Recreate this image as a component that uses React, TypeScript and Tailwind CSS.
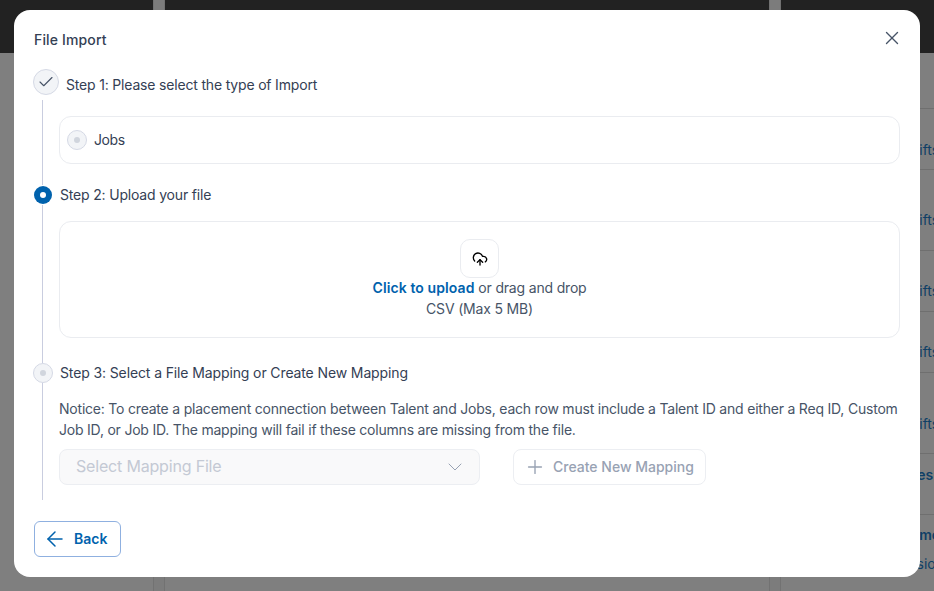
import { ArrowLeft, Check, ChevronDown, CloudUpload, Plus, X } from "lucide-react";

function Strip() {
    return <div className="w-[12px] shrink-0 border-x border-[#727272] bg-[#7c7c7c]" />;
}

export default function App() {
    return (
        <div className="relative h-[591px] w-[934px] overflow-hidden bg-[#7f7f7f] font-['Inter',sans-serif]">
            {/* Pagina de fondo */}
            <div className="flex h-full">
                <div className="w-[153px] shrink-0">
                    <div className="h-[53px] bg-[#222222]" />
                </div>
                <Strip />
                <div className="flex-1">
                    <div className="h-[53px] bg-[#222222]" />
                </div>
                <Strip />
                <div className="w-[153px] shrink-0 overflow-hidden whitespace-nowrap text-[14px] text-[#0f3f66]">
                    <div className="h-[53px] bg-[#222222]" />
                    <div className="mt-[55px] flex flex-col border-t border-[#6f6f6f]">
                        <div className="h-[61px] border-b border-[#6f6f6f] pl-[121px] pt-[30px]">Shifts</div>
                        <div className="h-[81px] border-b border-[#6f6f6f] pl-[121px] pt-[39px]">Shifts</div>
                        <div className="h-[61px] border-b border-[#6f6f6f] pl-[121px] pt-[29px]">Shifts</div>
                        <div className="h-[61px] border-b border-[#6f6f6f] pl-[121px] pt-[29px]">Shifts</div>
                        <div className="h-[81px] border-b border-[#6f6f6f] pl-[121px] pt-[40px]">Shifts</div>
                        <div className="h-[61px] border-b border-[#6f6f6f] pl-[115px] pt-[10px] font-semibold">Roles</div>
                        <div className="pl-[121px] pt-[9px] font-semibold">Remote</div>
                        <div className="pl-[90px] pt-[8px]">Permissions</div>
                    </div>
                </div>
            </div>

            {/* Modal */}
            <div className="absolute left-[14px] top-[10px] flex h-[567px] w-[906px] flex-col rounded-2xl bg-white px-5 pt-5 text-[14px] tracking-[-0.18px] text-[#344054]">
                <div className="flex h-5 items-center justify-between">
                    <h2 className="text-[14px] font-medium leading-5 tracking-[0.15px]">File Import</h2>
                    <X className="h-[22px] w-[22px] shrink-0 translate-x-[3px] -translate-y-0.5 text-[#475467]" strokeWidth={1.5} />
                </div>

                <div className="mt-[19px] flex h-[26px] items-center gap-[7px] -ml-px">
                    <div className="flex h-[26px] w-[26px] items-center justify-center rounded-full border border-[#d5d9e5] bg-[#f2f4f7]">
                        <Check className="h-[18px] w-[18px] text-[#475467]" strokeWidth={1.5} />
                    </div>
                    <span className="mt-[6px] leading-5">Step 1: Please select the type of Import</span>
                </div>

                <div className="ml-2 mt-[5px] flex flex-col border-l border-[#c9cddf] pl-4">
                    <div className="mt-4 flex h-[48px] items-center gap-[7px] rounded-xl border border-[#eaecf0] pl-[7px]">
                        <div className="flex h-5 w-5 items-center justify-center rounded-full border border-[#d5d9e5] bg-[#f2f4f7]">
                            <div className="h-[6px] w-[6px] rounded-full bg-[#d0d5dd]" />
                        </div>
                        <span className="-translate-y-px tracking-[-0.4px]">Jobs</span>
                    </div>
                    <div className="h-[21px]" />
                </div>

                <div className="flex h-5 items-center gap-[8px]">
                    <div className="flex h-[18px] w-[18px] items-center justify-center rounded-full bg-[#0062ad]">
                        <div className="h-[6px] w-[6px] rounded-full bg-white" />
                    </div>
                    <span className="-translate-y-px">Step 2: Upload your file</span>
                </div>

                <div className="ml-2 flex flex-col border-l border-[#c9cddf] pl-4">
                    <div className="mt-4 flex h-[117px] flex-col items-center rounded-xl border border-[#eaecf0] pt-[17px] text-[#475467]">
                        <div className="flex h-[39px] w-[39px] items-center justify-center rounded-[10px] border border-[#eaecf0]">
                            <CloudUpload className="h-4 w-4 text-black" strokeWidth={2} />
                        </div>
                        <p className="-mt-px leading-[21px]">
                            <span className="font-semibold tracking-[0.1px] text-[#0062ad]">Click to upload</span> or drag and drop
                        </p>
                        <p className="leading-[21px]">CSV (Max 5 MB)</p>
                    </div>
                    <div className="h-[25px]" />
                </div>

                <div className="flex h-5 items-center gap-[7px] -ml-px">
                    <div className="flex h-5 w-5 items-center justify-center rounded-full border border-[#d5d9e5] bg-[#f2f4f7]">
                        <div className="h-[6px] w-[6px] rounded-full bg-[#d0d5dd]" />
                    </div>
                    <span className="-translate-y-px tracking-[-0.12px]">Step 3: Select a File Mapping or Create New Mapping</span>
                </div>

                <div className="ml-2 flex flex-col border-l border-[#c9cddf] pl-4">
                    <p className="mt-[15px] leading-[21px] text-[#475467] tracking-[-0.21px]">
                        Notice: To create a placement connection between Talent and Jobs, each row must include a Talent ID and either a Req ID, Custom Job ID, or Job ID. The mapping will fail if these columns are missing from the file.
                    </p>
                    <div className="mt-[9px] flex gap-[33px]">
                        <div className="flex h-9 w-[421px] items-center justify-between rounded-lg border border-[#eceef2] bg-[#f9f9fa] pl-4 pr-3 text-[16px] text-[#c4c9d4]">
                            <span className="-translate-y-px">Select Mapping File</span>
                            <ChevronDown className="h-6 w-6 text-[#98a2b3]" strokeWidth={1} />
                        </div>
                        <div className="flex h-9 items-center gap-[7px] rounded-lg border border-[#eceef2] pl-[10px] pr-[11px] font-medium tracking-normal text-[#98a2b3]">
                            <Plus className="h-[22px] w-[22px]" strokeWidth={1.5} />
                            <span className="-translate-y-px">Create New Mapping</span>
                        </div>
                    </div>
                    <div className="h-[15px]" />
                </div>

                <button className="mt-[21px] flex h-9 w-[87px] items-center gap-[7px] rounded-md border border-[#8fb0e0] pl-2 font-semibold tracking-normal text-[#0062ad]">
                    <ArrowLeft className="h-6 w-6" strokeWidth={1.5} />
                    <span className="-translate-y-px">Back</span>
                </button>
            </div>
        </div>
    );
}
